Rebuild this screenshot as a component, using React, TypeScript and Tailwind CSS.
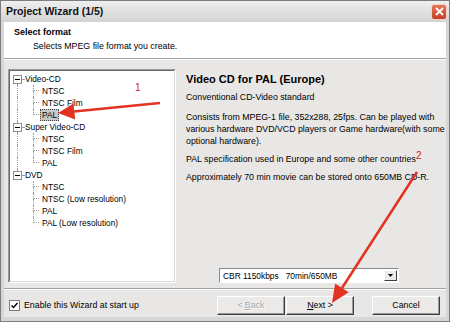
import React from "react";

const tree: { label: string; children: string[] }[] = [
  { label: "Video-CD", children: ["NTSC", "NTSC Film", "PAL"] },
  { label: "Super Video-CD", children: ["NTSC", "NTSC Film", "PAL"] },
  { label: "DVD", children: ["NTSC", "NTSC (Low resolution)", "PAL", "PAL (Low resolution)"] },
];

const dot = "border-dotted border-[#9a9a9a]";

function RootRow({ label, first, last }: { label: string; first: boolean; last: boolean }) {
  return (
    <div className="flex h-[12px] items-center">
      <div className="ml-[3px] flex h-full w-[9px] shrink-0 flex-col items-center">
        <div className={`w-0 flex-1 ${first ? "" : `border-l ${dot}`}`} />
        <div className="flex h-[9px] w-[9px] items-center justify-center border border-[#8e8e8e] bg-white">
          <div className="h-px w-[5px] bg-black" />
        </div>
        <div className={`w-0 flex-1 ${last ? "" : `border-l ${dot}`}`} />
      </div>
      <div className={`h-0 w-[2px] border-t ${dot}`} />
      <span className="ml-[1px] whitespace-nowrap">{label}</span>
    </div>
  );
}

function ChildRow({
  label,
  rootLine,
  last,
  selected,
}: {
  label: string;
  rootLine: boolean;
  last: boolean;
  selected?: boolean;
}) {
  return (
    <div className="flex h-[12px]">
      <div className="w-[7px] shrink-0" />
      <div className={`w-[16px] shrink-0 ${rootLine ? `border-l ${dot}` : ""}`} />
      <div className="flex w-[6px] shrink-0 flex-col">
        <div className={`h-[6px] border-b border-l ${dot}`} />
        <div className={`flex-1 ${last ? "" : `border-l ${dot}`}`} />
      </div>
      <span
        className={`ml-[1px] whitespace-nowrap px-px leading-[11px] ${
          selected ? "border border-dotted border-[#444] bg-[#c9c9c9]" : "border border-transparent"
        }`}
      >
        {label}
      </span>
    </div>
  );
}

function Button({ children, disabled }: { children: React.ReactNode; disabled?: boolean }) {
  return (
    <div
      className={`flex h-[19px] w-[68px] items-center justify-center border border-b-[#404040] border-l-white border-r-[#404040] border-t-white bg-[#ebeae8] shadow-[inset_-1px_-1px_0_#9a9a9a] ${
        disabled ? "text-[#a8a8a8] [text-shadow:1px_1px_0_#fff]" : "text-black"
      }`}
    >
      {children}
    </div>
  );
}

export default function App() {
  return (
    <div className="relative flex h-[322px] w-[450px] flex-col overflow-hidden border border-[#7d7d7d] bg-[#d6d6d6] font-['Liberation_Sans',Arial,sans-serif] text-[8.8px] text-black">
      {/* Title bar */}
      <div className="flex h-[21px] shrink-0 items-center justify-between bg-gradient-to-b from-[#efefef] to-[#d3d3d3] pl-[5px] pr-[2px]">
        <span className="text-[10.5px] font-bold text-[#111]">Project Wizard (1/5)</span>
        <div className="flex h-[16px] w-[16px] items-center justify-center rounded-[3px] border border-[#f4d2c8] bg-gradient-to-b from-[#e8745a] to-[#c53c25]">
          <svg width="9" height="9" viewBox="0 0 9 9">
            <path d="M1 1L8 8M8 1L1 8" stroke="white" strokeWidth="1.8" />
          </svg>
        </div>
      </div>

      <div className="flex flex-1 flex-col px-[3px] pb-[4px]">
        {/* Header */}
        <div className="flex h-[36px] shrink-0 flex-col bg-white pt-[5px]">
          <div className="pl-[10px] text-[9px] font-bold leading-[11px]">Select format</div>
          <div className="mt-[3px] pl-[29px] leading-[11px]">Selects MPEG file format you create.</div>
        </div>
        <div className="h-px bg-[#a2a2a2]" />
        <div className="h-px bg-white" />

        {/* Body */}
        <div className="flex flex-1 bg-[#e8e7e5] pt-[9px]">
          <div className="ml-[4px] h-[214px] w-[168px] shrink-0 border border-b-white border-l-[#9a9a9a] border-r-white border-t-[#9a9a9a]">
            <div className="h-full w-full border border-b-[#d8d8d8] border-l-[#6a6a6a] border-r-[#d8d8d8] border-t-[#6a6a6a] bg-white pt-[2px] text-[8.3px]">
              {tree.map((node, i) => (
                <div key={node.label}>
                  <RootRow label={node.label} first={i === 0} last={i === tree.length - 1} />
                  {node.children.map((c, j) => (
                    <ChildRow
                      key={c + j}
                      label={c}
                      rootLine={i !== tree.length - 1}
                      last={j === node.children.length - 1}
                      selected={i === 0 && c === "PAL"}
                    />
                  ))}
                </div>
              ))}
            </div>
          </div>

          <div className="ml-[10px] flex flex-1 flex-col pb-[5px] pt-[3px] leading-[12px]">
            <div className="text-[11px] font-bold leading-[14px]">Video CD for PAL (Europe)</div>
            <div className="mt-[5px]">Conventional CD-Video standard</div>
            <div className="mt-[8px]">
              Consists from MPEG-1 file, 352x288, 25fps. Can be played with
              <br />
              various hardware DVD/VCD players or Game hardware(with some
              <br />
              optional hardware).
            </div>
            <div className="mt-[6px]">PAL specification used in Europe and some other countries</div>
            <div className="mt-[6px]">Approximately 70 min movie can be stored onto 650MB CD-R.</div>

            <div className="ml-[33px] mt-auto flex h-[15px] w-[180px] items-center border border-b-white border-l-[#8a8a8a] border-r-white border-t-[#8a8a8a] bg-white">
              <span className="flex-1 whitespace-pre pl-[3px] text-[8.4px]">CBR 1150kbps   70min/650MB</span>
              <div className="mr-px flex h-[11px] w-[13px] items-center justify-center border border-b-[#404040] border-l-white border-r-[#404040] border-t-white bg-[#ebeae8]">
                <svg width="5" height="3" viewBox="0 0 5 3">
                  <path d="M0 0H5L2.5 3Z" fill="black" />
                </svg>
              </div>
            </div>
          </div>
        </div>

        <div className="h-px bg-[#a2a2a2]" />
        <div className="h-px bg-white" />

        {/* Footer */}
        <div className="flex h-[27px] shrink-0 items-start bg-[#e8e7e5] pr-[6px] pt-[6px]">
          <div className="ml-[5px] mt-[3px] flex items-center">
            <div className="flex h-[11px] w-[11px] items-center justify-center border border-[#7a7a7a] bg-white">
              <svg width="7" height="7" viewBox="0 0 7 7">
                <path d="M0.5 3.5L2.5 5.5L6.5 1" stroke="black" strokeWidth="1.5" fill="none" />
              </svg>
            </div>
            <span className="ml-[4px]">Enable this Wizard at start up</span>
          </div>
          <div className="ml-auto flex">
            <Button disabled>
              &lt; <span className="ml-[2px] underline">B</span>ack
            </Button>
            <div className="w-px" />
            <Button>
              <span className="underline">N</span>ext &gt;
            </Button>
            <div className="w-[18px]" />
            <Button>Cancel</Button>
          </div>
        </div>
      </div>

      {/* Red annotation arrows */}
      <svg className="pointer-events-none absolute left-[-1px] top-[-1px]" width="450" height="322" viewBox="0 0 450 322">
        <line x1="160" y1="103" x2="74" y2="111.4" stroke="#e3321f" strokeWidth="2.5" />
        <path d="M58 113L75.2 119.4L73.4 103.5Z" fill="#e3321f" />
        <text x="135" y="91" fill="#d1201a" fontSize="10" fontFamily="Liberation Sans, Arial, sans-serif">1</text>
        <line x1="417" y1="172" x2="342" y2="288" stroke="#e3321f" strokeWidth="2.5" />
        <path d="M332 303L348.6 292.3L335.2 283.5Z" fill="#e3321f" />
        <text x="416" y="159" fill="#d1201a" fontSize="10" fontFamily="Liberation Sans, Arial, sans-serif">2</text>
      </svg>
    </div>
  );
}
